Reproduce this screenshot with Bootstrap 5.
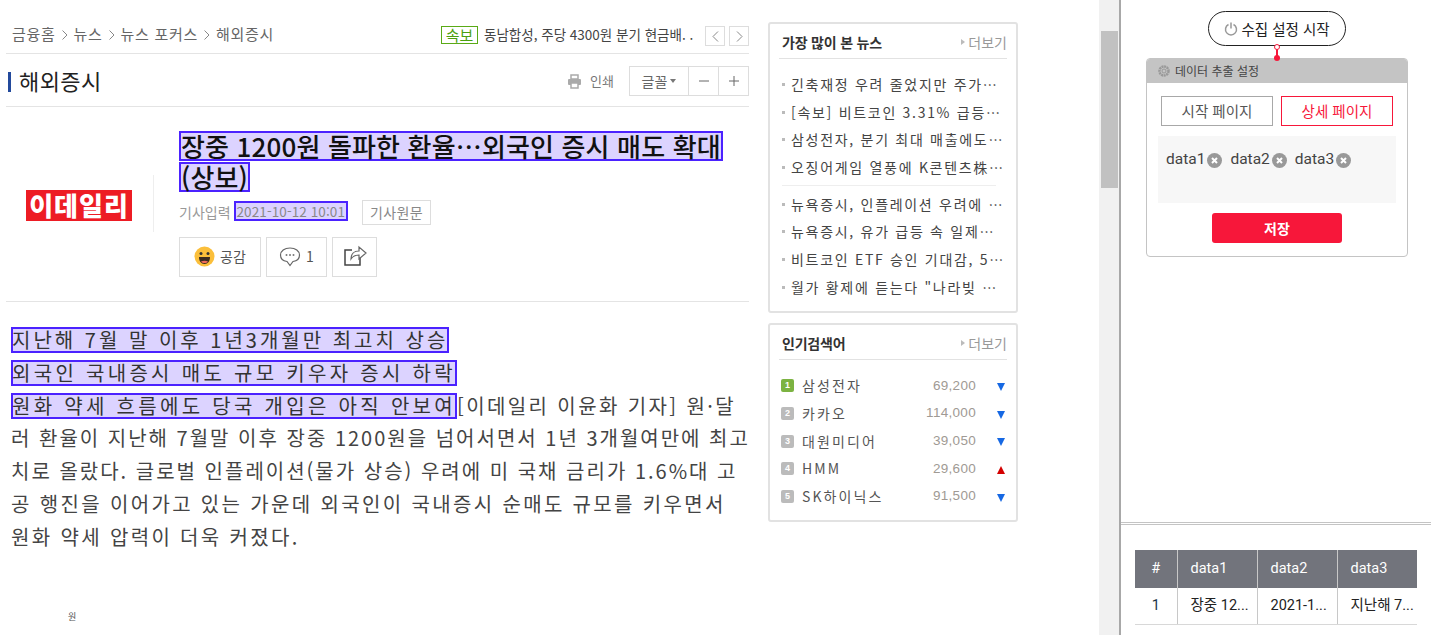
<!DOCTYPE html>
<html lang="ko">
<head>
    <meta charset="UTF-8">
    <title>해외증시</title>
    <meta name="viewport" content="width=device-width, initial-scale=1">
    <link href="https://cdn.jsdelivr.net/npm/bootstrap@5.3.3/dist/css/bootstrap.min.css" rel="stylesheet">
    <style>
        html, body { height: 635px; overflow: hidden; }
        body { font-family: "Noto Sans CJK KR", "Liberation Sans", sans-serif; color: #333; font-size: 14px; }
        .page-wrap { height: 635px; }
        .news-side { width: 1099px; padding-left: 6px; flex: none; }
        .art-col { width: 743px; flex: none; }
        .side-col { width: 250px; margin-left: 19px; padding-top: 22px; flex: none; }

        .crumb-row { height: 54px; padding: 26px 0 0 6px; border-bottom: 1px solid #e4e4e4; font-size: 15px; color: #666; letter-spacing: .7px; }
        .crumb-arrow { margin: 0 6px; }
        .flash-tag { border: 1px solid #5aaa16; color: #4aa010; font-size: 15px; line-height: 16px; width: 37px; text-align: center; height: 18px; letter-spacing: 0; }
        .flash-text { font-size: 13.5px; color: #444; margin-left: 6px; width: 221px; white-space: nowrap; letter-spacing: 0; }
        .pg-btn { width: 20px; height: 20px; border: 1px solid #ddd; }

        .title-row { height: 53px; border-bottom: 1px solid #e4e4e4; padding-top: 12px; }
        .sect-title { border-left: 3px solid #234a9c; margin: 6px 0 0 2px; padding-left: 8px; font-size: 22px; line-height: 16px; color: #222; height: 20px; letter-spacing: .4px; }
        .print-lnk { font-size: 13px; color: #777; margin-right: 15px; }
        .font-tools { border: 1px solid #ddd; height: 30px; width: 120px; }
        .font-tools > div { border-left: 1px solid #ddd; width: 30px; }
        .font-tools > div:first-child { border-left: 0; flex: 1; font-size: 14px; color: #666; }
        .tiny-caret { width: 0; height: 0; border: 3px solid transparent; border-top: 4px solid #777; border-bottom: 0; margin-left: 3px; }

        .head-row { height: 195px; border-bottom: 1px solid #e4e4e4; padding-top: 24px; }
        .logo-cell { width: 147px; flex: none; padding: 59px 0 0 0; }
        .press-logo { margin-left: 20px; width: 106px; height: 31px; background: #ed1c24; color: #fff; font-weight: 900; font-size: 26px; line-height: 30px; text-align: center; letter-spacing: 1px; }
        .logo-line { width: 1px; height: 57px; background: #eee; margin-top: 44px; flex: none; }
        .head-info { margin-left: 25px; width: 570px; }
        .hl-box { display: inline-block; background: #dcd3ff; box-shadow: inset 0 0 0 2px #4b22ff; }
        .art-headline { font-size: 26px; line-height: 31px; font-weight: 500; color: #111; margin: 0; padding: 0; letter-spacing: .15px; white-space: nowrap; }
        .art-headline .hl-box { height: 30px; line-height: 29px; padding: 0 2px; vertical-align: top; }
        .meta-row { margin-top: 7px; height: 25px; color: #999; font-size: 14px; }
        .date-box { padding: 0 3px; margin: -4px 0 0 3px; height: 20px; line-height: 20px; font-size: 13.5px; color: #888; letter-spacing: .1px; }
        .src-btn { border: 1px solid #ddd; height: 25px; line-height: 23px; padding: 0 7px; margin-left: 14px; color: #888; letter-spacing: .4px; }
        .act-row { margin-top: 12px; gap: 5px; }
        .act-btn { border: 1px solid #ddd; height: 40px; font-size: 14px; color: #555; gap: 5px; padding-bottom: 2px; }

        .art-body { padding: 22px 0 0 5px; font-size: 20px; line-height: 32.8px; color: #444; white-space: nowrap; letter-spacing: 2px; }
        .art-body .hl-box { height: 26px; line-height: 25px; padding: 0 1px; color: #333; letter-spacing: 3px; vertical-align: baseline; }
        .art-body .hl-box.hl-wide { letter-spacing: 3.3px; }
        .ln-tail { letter-spacing: 2.4px; }
        .ln-wide { letter-spacing: 2.35px; }
        .tiny-word { font-size: 9px; color: #555; margin: 57px 0 0 57px; line-height: 12px; letter-spacing: 0; }

        .box-card { border: 2px solid #e2e2e2; border-radius: 3px; padding: 0 9px; margin-bottom: 10px; background: #fff; }
        .box-head { height: 35px; border-bottom: 1px solid #e2e2e2; padding: 8px 0 0 3px; }
        .box-head strong { font-size: 14px; font-weight: 700; color: #333; letter-spacing: -.2px; }
        .more-lnk { font-size: 14px; color: #999; }
        .more-lnk::before { content: ""; display: inline-block; border: 3px solid transparent; border-left: 4px solid #bbb; border-right: 0; margin-right: 3px; vertical-align: 3px; }
        .pop-list { font-size: 14px; color: #444; letter-spacing: 1.7px; margin: 0; padding: 0 0 0 3px; }
        .pop-list li { height: 27.7px; line-height: 27.7px; padding-left: 9px; white-space: nowrap; position: relative; overflow: hidden; }
        .pop-list li::before { content: ""; position: absolute; left: 0; top: 12px; width: 3px; height: 3px; background: #bbb; }
        .pop-list li.pop-sep { height: 1px; padding: 0; background: #eee; margin: 3px 11px 5px 0; }
        .pop-list li.pop-sep::before { display: none; }
        .rank-list { padding: 12px 0 0 2px; }
        .rank-row { height: 27.7px; font-size: 14px; color: #555; letter-spacing: 2.1px; }
        .rank-no { width: 13px; height: 13px; border-radius: 2px; background: #bbb; color: #fff; font-size: 9px; font-weight: 700; line-height: 13px; text-align: center; margin-right: 8px; letter-spacing: 0; font-family: "Liberation Sans", sans-serif; }
        .rank-no.on { background: #7cb342; }
        .rank-price { margin-left: auto; color: #a09a94; font-size: 13.5px; letter-spacing: .3px; font-family: "Liberation Sans", sans-serif; }
        .tri-dn, .tri-up { width: 0; height: 0; border-left: 4.5px solid transparent; border-right: 4.5px solid transparent; margin: 2px 2px 0 21px; }
        .tri-dn { border-top: 8px solid #1668e3; }
        .tri-up { border-bottom: 8px solid #d40000; }

        .scroll-track { width: 21px; background: #f1f1f1; flex: none; padding: 31px 2px 0; }
        .scroll-thumb { height: 157px; background: #c1c1c1; }

        .tool-panel { border-left: 2px solid #a8a8a8; flex: 1; margin-left: -1px; font-family: "Noto Sans CJK KR", sans-serif; }
        .tool-top { height: 522px; padding: 11px 0 0 2px; }
        .start-pill { width: 138px; height: 35px; border: 1px solid #222; border-radius: 18px; background: #fff; font-size: 14.5px; color: #222; gap: 3px; }
        .link-line { width: 2px; height: 12px; background: #f7173a; position: relative; }
        .link-line::before, .link-line::after { content: ""; position: absolute; left: -2px; width: 6px; height: 6px; border-radius: 50%; background: #f7173a; }
        .link-line::before { top: -2px; background: #fff; border: 1.5px solid #f7173a; }
        .link-line::after { bottom: -3px; }
        .extract-card { width: 262px; border: 1px solid #c4c4c4; border-radius: 4px; height: 199px; overflow: hidden; }
        .extract-head { height: 25px; background: #c4c4c4; font-size: 12px; color: #444; padding-left: 11px; gap: 4px; margin: -1px -1px 0; }
        .page-tabs { gap: 8px; padding: 13px 14px 0; }
        .page-tab { width: 112px; height: 30px; border: 1px solid #a8a8a8; font-size: 14.5px; color: #555; line-height: 28px; text-align: center; }
        .page-tab.on { border-color: #f7173a; color: #f7173a; }
        .chip-area { margin: 10px 11px 0; height: 67px; background: #f7f7f7; padding: 15px 8px 0; gap: 8px; font-size: 15.5px; color: #444; font-family: "Roboto", sans-serif; }
        .chip-item { gap: 2px; height: 18px; }
        .save-btn { width: 130px; height: 30px; background: #f7173a; color: #fff; font-size: 14px; font-weight: 700; border-radius: 3px; line-height: 30px; text-align: center; margin: 10px auto 0; }

        .tool-bottom { border-top: 3px double #c4c4c4; padding: 25px 0 0 14px; }
        .res-table { width: 282px; table-layout: fixed; margin: 0; font-size: 14.5px; font-family: "Roboto", "Noto Sans CJK KR", sans-serif; }
        .res-table th { background: #72747c; color: #fff; font-weight: 400; height: 38px; padding: 0 0 0 13px; vertical-align: middle; border: 0; border-left: 1px solid #c8c8c8; box-shadow: none; }
        .res-table td { height: 36px; padding: 0 0 0 13px; vertical-align: middle; border: 0; border-left: 1px solid #c8c8c8; border-bottom: 1px solid #d8d8d8; color: #222; white-space: nowrap; overflow: hidden; box-shadow: none; }
        .res-table th:first-child, .res-table td:first-child { border-left: 0; text-align: center; padding: 0; width: 42px; color: #fff; }
        .res-table td:first-child { color: #234; }
    </style>
</head>
<body>
    <div class="d-flex page-wrap">
        <div class="news-side d-flex">
            <div class="art-col">
                <div class="crumb-row d-flex justify-content-between">
                    <div class="d-flex align-items-start" style="line-height:16px">
                        금융홈
                        <svg class="crumb-arrow mt-1" width="6" height="10" viewBox="0 0 6 10"><path d="M.5.5 5 5 .5 9.500" fill="none" stroke="#888"/></svg>
                        뉴스
                        <svg class="crumb-arrow mt-1" width="6" height="10" viewBox="0 0 6 10"><path d="M.5.5 5 5 .5 9.500" fill="none" stroke="#888"/></svg>
                        뉴스 포커스
                        <svg class="crumb-arrow mt-1" width="6" height="10" viewBox="0 0 6 10"><path d="M.5.5 5 5 .5 9.500" fill="none" stroke="#888"/></svg>
                        해외증시
                    </div>
                    <div class="d-flex align-items-start" style="line-height:16px">
                        <div class="flash-tag">속보</div>
                        <div class="flash-text">동남합성, 주당 4300원 분기 현금배. .</div>
                        <div class="pg-btn d-flex align-items-center justify-content-center"><svg width="7" height="11" viewBox="0 0 7 11"><path d="M6 .5 1 5.500 6 10.500" fill="none" stroke="#888"/></svg></div>
                        <div class="pg-btn d-flex align-items-center justify-content-center ms-1"><svg width="7" height="11" viewBox="0 0 7 11"><path d="M1 .5 6 5.500 1 10.500" fill="none" stroke="#888"/></svg></div>
                    </div>
                </div>

                <div class="title-row d-flex justify-content-between">
                    <div class="sect-title">해외증시</div>
                    <div class="d-flex align-items-start">
                        <div class="print-lnk d-flex align-items-center gap-1" style="height:30px">
                            <svg width="15" height="15" viewBox="0 0 15 15"><rect x="4" y="1" width="7" height="4" fill="none" stroke="#aaa" stroke-width="1.500"/><rect x="1" y="5" width="13" height="6" rx="1" fill="#aaa"/><rect x="4" y="9" width="7" height="5" fill="#fff" stroke="#aaa" stroke-width="1.500"/></svg>
                            <span class="ms-1">인쇄</span>
                        </div>
                        <div class="font-tools d-flex">
                            <div class="d-flex align-items-center justify-content-center">글꼴<span class="tiny-caret"></span></div>
                            <div class="d-flex align-items-center justify-content-center"><svg width="12" height="12" viewBox="0 0 12 12"><path d="M1 6h10" stroke="#666"/></svg></div>
                            <div class="d-flex align-items-center justify-content-center"><svg width="12" height="12" viewBox="0 0 12 12"><path d="M1 6h10M6 1v10" stroke="#666"/></svg></div>
                        </div>
                    </div>
                </div>

                <div class="head-row d-flex">
                    <div class="logo-cell"><div class="press-logo">이데일리</div></div>
                    <div class="logo-line"></div>
                    <div class="head-info">
                        <h1 class="art-headline"><span class="hl-box">장중 1200원 돌파한 환율…외국인 증시 매도 확대</span><br><span class="hl-box">(상보)</span></h1>
                        <div class="meta-row d-flex align-items-center">
                            기사입력<span class="date-box hl-box">2021-10-12 10:01</span><span class="src-btn">기사원문</span>
                        </div>
                        <div class="act-row d-flex">
                            <div class="act-btn d-flex align-items-center justify-content-center" style="width:82px">
                                <svg width="21" height="21" viewBox="0 0 21 21"><circle cx="10.500" cy="10.500" r="10" fill="#fbbf3b"/><circle cx="7" cy="7.500" r="1.500" fill="#333"/><circle cx="14" cy="7.500" r="1.500" fill="#333"/><path d="M5 11h11c0 4-2 7-5.500 7S5 15 5 11z" fill="#3a2b20"/><path d="M7 15.500c2-1 5-1 7 0-1 2-6 2-7 0z" fill="#f06a5a"/></svg>
                                공감
                            </div>
                            <div class="act-btn d-flex align-items-center justify-content-center" style="width:61px">
                                <svg width="22" height="22" viewBox="0 0 22 22"><path d="M8 16.500c-4-.5-6.500-2.700-6.500-6.500 0-4 4-7 9.500-7s9.500 3 9.500 7c0 3.800-2.500 6-6.500 6.500L11 20.500z" fill="none" stroke="#666" stroke-width="1.200"/><circle cx="7.500" cy="10" r="1" fill="#777"/><circle cx="11" cy="10" r="1" fill="#777"/><circle cx="14.500" cy="10" r="1" fill="#777"/></svg>
                                1
                            </div>
                            <div class="act-btn d-flex align-items-center justify-content-center" style="width:45px">
                                <svg width="24" height="22" viewBox="0 0 24 22"><path d="M9 5H2v15h15v-7" fill="none" stroke="#444" stroke-width="1.500"/><path d="M8 14c0-5 3-8 8-8V2l7 6-7 6v-4c-3 0-6 1-8 4z" fill="none" stroke="#666" stroke-width="1.200"/></svg>
                            </div>
                        </div>
                    </div>
                </div>

                <div class="art-body">
                    <span class="hl-box">지난해 7월 말 이후 1년3개월만 최고치 상승</span><br>
                    <span class="hl-box hl-wide">외국인 국내증시 매도 규모 키우자 증시 하락</span><br>
                    <span class="hl-box hl-wide">원화 약세 흐름에도 당국 개입은 아직 안보여</span><span class="ln-tail">[이데일리 이윤화 기자] 원·달</span><br>
                    러 환율이 지난해 7월말 이후 장중 1200원을 넘어서면서 1년 3개월여만에 최고<br>
                    치로 올랐다. 글로벌 인플레이션(물가 상승) 우려에 미 국채 금리가 1.6%대 고<br>
                    <span class="ln-wide">공 행진을 이어가고 있는 가운데 외국인이 국내증시 순매도 규모를 키우면서</span><br>
                    <span class="ln-wide">원화 약세 압력이 더욱 커졌다.</span>
                    <div class="tiny-word">원</div>
                </div>
            </div>

            <div class="side-col">
                <div class="box-card">
                    <div class="box-head d-flex justify-content-between align-items-start">
                        <strong>가장 많이 본 뉴스</strong><span class="more-lnk">더보기</span>
                    </div>
                    <ul class="pop-list list-unstyled" style="padding-top:12px;height:252px">
                        <li>긴축재정 우려 줄었지만 주가…</li>
                        <li>[속보] 비트코인 3.31% 급등…</li>
                        <li>삼성전자, 분기 최대 매출에도…</li>
                        <li>오징어게임 열풍에 K콘텐츠株…</li>
                        <li class="pop-sep"></li>
                        <li>뉴욕증시, 인플레이션 우려에 …</li>
                        <li>뉴욕증시, 유가 급등 속 일제…</li>
                        <li>비트코인 ETF 승인 기대감, 5…</li>
                        <li>월가 황제에 듣는다 "나라빚 …</li>
                    </ul>
                </div>
                <div class="box-card" style="height:199px">
                    <div class="box-head d-flex justify-content-between align-items-start">
                        <strong>인기검색어</strong><span class="more-lnk">더보기</span>
                    </div>
                    <div class="rank-list" id="rankList"></div>
                </div>
            </div>
        </div>

        <div class="scroll-track"><div class="scroll-thumb"></div></div>

        <div class="tool-panel">
            <div class="tool-top d-flex flex-column align-items-center">
                <div class="start-pill d-flex align-items-center justify-content-center">
                    <svg width="14" height="14" viewBox="0 0 14 14"><path d="M4.500 2.500a5.500 5.500 0 1 0 5 0M7 .5v6" fill="none" stroke="#999" stroke-width="1.500"/></svg>
                    수집 설정 시작
                </div>
                <div class="link-line"></div>
                <div class="extract-card">
                    <div class="extract-head d-flex align-items-center">
                        <svg width="14" height="14" viewBox="0 0 14 14"><circle cx="7" cy="7" r="4.500" fill="none" stroke="#999" stroke-width="2.500" stroke-dasharray="2 .6"/><circle cx="7" cy="7" r="2" fill="none" stroke="#999"/></svg>
                        데이터 추출 설정
                    </div>
                    <div class="page-tabs d-flex">
                        <div class="page-tab">시작 페이지</div>
                        <div class="page-tab on">상세 페이지</div>
                    </div>
                    <div class="chip-area d-flex align-items-start" id="chipArea"></div>
                    <div class="save-btn">저장</div>
                </div>
            </div>
            <div class="tool-bottom">
                <table class="table res-table">
                    <thead>
                        <tr><th style="width:42px">#</th><th>data1</th><th>data2</th><th>data3</th></tr>
                    </thead>
                    <tbody>
                        <tr><td>1</td><td>장중 12...</td><td>2021-1...</td><td>지난해 7...</td></tr>
                    </tbody>
                </table>
            </div>
        </div>
    </div>

    <script src="https://cdn.jsdelivr.net/npm/bootstrap@5.3.3/dist/js/bootstrap.bundle.min.js"></script>
    <script>
        const ranks = [
            ['삼성전자', '69,200', 'dn'],
            ['카카오', '114,000', 'dn'],
            ['대원미디어', '39,050', 'dn'],
            ['HMM', '29,600', 'up'],
            ['SK하이닉스', '91,500', 'dn']
        ];
        document.getElementById('rankList').innerHTML = ranks.map((r, i) => `
            <div class="rank-row d-flex align-items-center">
                <span class="rank-no ${i === 0 ? 'on' : ''}">${i + 1}</span>
                <span>${r[0]}</span>
                <span class="rank-price">${r[1]}</span>
                <span class="tri-${r[2]}"></span>
            </div>`).join('');

        document.getElementById('chipArea').innerHTML = ['data1', 'data2', 'data3'].map(d => `
            <div class="chip-item d-flex align-items-center">${d}
                <svg width="15" height="15" viewBox="0 0 15 15"><circle cx="7.500" cy="7.500" r="7.500" fill="#999"/><path d="M5 5l5 5M10 5l-5 5" stroke="#fff" stroke-width="2"/></svg>
            </div>`).join('');
    </script>
</body>
</html>
